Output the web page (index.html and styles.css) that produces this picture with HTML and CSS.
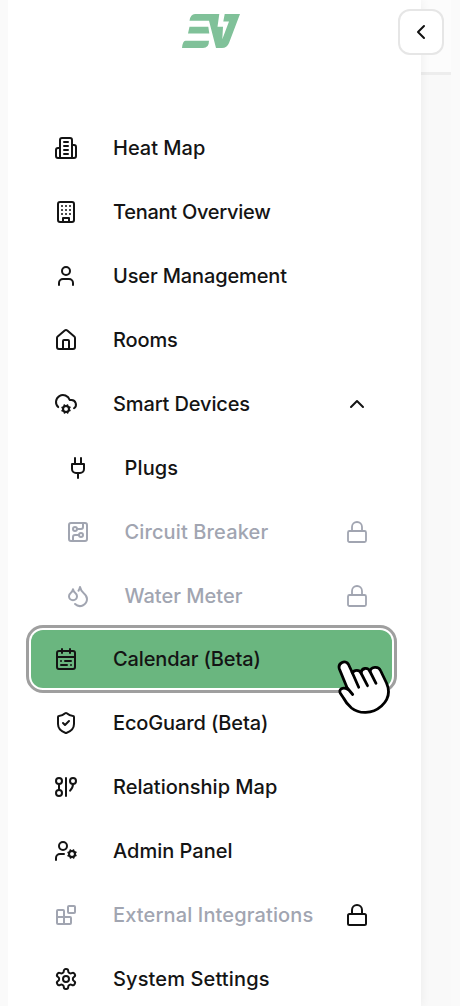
FILE: index.html
```html
<!DOCTYPE html>
<html lang="en">
<head>
<meta charset="utf-8">
<title>Navigation</title>
<link rel="stylesheet" href="styles.css">
</head>
<body>
<div class="app">
<aside class="sidebar">
<div class="brand"><svg class="logo" viewBox="0 0 58 34"><path d="M13 0H37.3L35.5 12.7H41L40.3 25.3L47 7.5H41.3L42.7 0H58L47 29Q45 34 40 34H34L27 6.7H7.5Q8.5 0 13 0ZM7.5 12.8H26.3L27.3 19.6H6ZM3.5 26.7H27Q27 34 21 34H0Q.5 27 3.5 26.7Z"/></svg></div>
<nav class="menu">
<a class="item"><svg class="icon" viewBox="0 0 24 24"><path d="M6 22V4a2 2 0 0 1 2-2h8a2 2 0 0 1 2 2v18ZM6 12H4a2 2 0 0 0-2 2v6a2 2 0 0 0 2 2h2M18 9h2a2 2 0 0 1 2 2v9a2 2 0 0 1-2 2h-2M10 6h4M10 10h4M10 14h4M10 18h4"/></svg><span class="label">Heat Map</span></a>
<a class="item"><svg class="icon" viewBox="0 0 24 24"><rect x="4" y="2" width="16" height="20" rx="2"/><path d="M9 22v-4h6v4M8 6h.01M12 6h.01M16 6h.01M8 10h.01M12 10h.01M16 10h.01M8 14h.01M12 14h.01M16 14h.01"/></svg><span class="label tightest">Tenant Overview</span></a>
<a class="item"><svg class="icon" viewBox="0 0 24 24"><path d="M19 21v-2a4 4 0 0 0-4-4H9a4 4 0 0 0-4 4v2"/><circle cx="12" cy="7" r="4"/></svg><span class="label tight">User Management</span></a>
<a class="item"><svg class="icon" viewBox="0 0 24 24"><path d="M15 21v-8a1 1 0 0 0-1-1h-4a1 1 0 0 0-1 1v8M3 10a2 2 0 0 1 .709-1.528l7-5.999a2 2 0 0 1 2.582 0l7 5.999A2 2 0 0 1 21 10v9a2 2 0 0 1-2 2H5a2 2 0 0 1-2-2z"/></svg><span class="label tight">Rooms</span></a>
<a class="item"><svg class="icon" viewBox="0 0 24 24"><circle cx="12" cy="17" r="3"/><path d="M4.2 15.1A7 7 0 1 1 15.71 8h1.79a4.5 4.5 0 0 1 2.5 8.2M15.7 18.4l-.9-.3M9.2 15.9l-.9-.3M10.6 20.7l.3-.9M13.1 14.2l.3-.9M13.6 20.7l-.4-1M10.8 14.3l-.4-1M8.3 18.6l1-.4M14.7 15.8l1-.4"/></svg><span class="label tight">Smart Devices</span><svg class="end" viewBox="0 0 24 24"><path d="m6 15 6-6 6 6"/></svg></a>
<a class="item sub"><svg class="icon" viewBox="0 0 24 24"><path d="M12 22v-5M9 8V2M15 8V2M18 8v5a4 4 0 0 1-4 4h-4a4 4 0 0 1-4-4V8Z"/></svg><span class="label loose">Plugs</span></a>
<a class="item sub muted"><svg class="icon" viewBox="0 0 24 24"><rect x="3" y="3" width="18" height="18" rx="2"/><path d="M11 9h4a2 2 0 0 0 2-2V3M7 21v-4a2 2 0 0 1 2-2h4"/><circle cx="9" cy="9" r="2"/><circle cx="15" cy="15" r="2"/></svg><span class="label loose">Circuit Breaker</span><svg class="end lock" viewBox="0 0 24 24"><rect x="3" y="11" width="18" height="11" rx="1.5"/><path d="M7 11V7a5 5 0 0 1 10 0v4"/></svg></a>
<a class="item sub muted"><svg class="icon" viewBox="0 0 24 24"><path d="M7 16.3c2.2 0 4-1.83 4-4.05 0-1.16-.57-2.26-1.71-3.19S7.29 6.75 7 5.3c-.29 1.45-1.14 2.84-2.29 3.76S3 11.1 3 12.25c0 2.22 1.8 4.05 4 4.05zM12.56 6.6A10.97 10.97 0 0 0 14 3.02c.5 2.5 2 4.9 4 6.5s3 3.5 3 5.5a6.98 6.98 0 0 1-11.91 4.97"/></svg><span class="label">Water Meter</span><svg class="end lock" viewBox="0 0 24 24"><rect x="3" y="11" width="18" height="11" rx="1.5"/><path d="M7 11V7a5 5 0 0 1 10 0v4"/></svg></a>
<a class="item active"><svg class="icon" viewBox="0 0 24 24"><rect x="3" y="4" width="18" height="18" rx="2"/><path d="M16 2v4M3 10h18M8 2v4M17 14h-6M13 18H7M7 14h.01M17 18h.01"/></svg><span class="label tight">Calendar (Beta)</span>
<svg class="hand" viewBox="0 0 54 58"><path d="M2.4 9C.5 3 8.500-1 11.500 4.500L15.500 13C17 9.500 22.500 9.500 24 13 24.500 7.500 31 7 33 11.500 34 6.500 41.500 6 43.500 10.500L49.500 23C53.500 32 51 40 44.500 46 35 54.500 22 54 14.500 48 11 45 8 41 6.500 38L3.500 33.500C1 29 6 26.500 10.700 29.300Z"/><path d="m15.700 34.500-5-6M15 12l6.700 15.300M24 13l6.500 12.700M33 11.500l6 11.800"/></svg></a>
<a class="item"><svg class="icon" viewBox="0 0 24 24"><path d="M20 13c0 5-3.5 7.5-7.66 8.95a1 1 0 0 1-.67-.01C7.5 20.5 4 18 4 13V6a1 1 0 0 1 1-1c2 0 4.5-1.2 6.24-2.72a1.17 1.17 0 0 1 1.52 0C14.51 3.81 17 5 19 5a1 1 0 0 1 1 1zM9 12l2 2 4-4"/></svg><span class="label tight">EcoGuard (Beta)</span></a>
<a class="item"><svg class="icon" viewBox="0 0 24 24"><circle cx="5" cy="6" r="3"/><circle cx="5" cy="18" r="3"/><circle cx="19" cy="6" r="3"/><path d="M5 9v6M12 3v18M16 15.7A9 9 0 0 0 19 9"/></svg><span class="label">Relationship Map</span></a>
<a class="item"><svg class="icon" viewBox="0 0 24 24"><circle cx="18" cy="15" r="3"/><circle cx="9" cy="7" r="4"/><path d="M10 15H6a4 4 0 0 0-4 4v2M21.7 16.4l-.9-.3M15.2 13.9l-.9-.3M16.6 18.7l.3-.9M19.1 12.2l.3-.9M19.6 18.7l-.4-1M16.8 12.3l-.4-1M14.3 16.6l1-.4M20.7 13.8l1-.4"/></svg><span class="label">Admin Panel</span></a>
<a class="item muted"><svg class="icon" viewBox="0 0 24 24"><rect x="14" y="3" width="7" height="7" rx="1"/><path d="M10 21V8a1 1 0 0 0-1-1H4a1 1 0 0 0-1 1v12a1 1 0 0 0 1 1h12a1 1 0 0 0 1-1v-5a1 1 0 0 0-1-1H3"/></svg><span class="label loose">External Integrations</span><svg class="end dark" viewBox="0 0 24 24"><rect x="3" y="11" width="18" height="11" rx="1.5"/><path d="M7 11V7a5 5 0 0 1 10 0v4"/></svg></a>
<a class="item"><svg class="icon" viewBox="0 0 24 24"><path d="M12.22 2h-.44a2 2 0 0 0-2 2v.18a2 2 0 0 1-1 1.73l-.43.25a2 2 0 0 1-2 0l-.15-.08a2 2 0 0 0-2.73.73l-.22.38a2 2 0 0 0 .73 2.73l.15.1a2 2 0 0 1 1 1.72v.51a2 2 0 0 1-1 1.74l-.15.09a2 2 0 0 0-.73 2.73l.22.38a2 2 0 0 0 2.73.73l.15-.08a2 2 0 0 1 2 0l.43.25a2 2 0 0 1 1 1.73V20a2 2 0 0 0 2 2h.44a2 2 0 0 0 2-2v-.18a2 2 0 0 1 1-1.73l.43-.25a2 2 0 0 1 2 0l.15.08a2 2 0 0 0 2.73-.73l.22-.39a2 2 0 0 0-.73-2.73l-.15-.08a2 2 0 0 1-1-1.74v-.5a2 2 0 0 1 1-1.74l.15-.09a2 2 0 0 0 .73-2.73l-.22-.38a2 2 0 0 0-2.73-.73l-.15.08a2 2 0 0 1-2 0l-.43-.25a2 2 0 0 1-1-1.73V4a2 2 0 0 0-2-2z"/><circle cx="12" cy="12" r="3"/></svg><span class="label loose">System Settings</span></a>
</nav>
<button class="collapse" aria-label="Collapse"><svg viewBox="0 0 24 24"><path d="m15 6-6 6 6 6"/></svg></button>
</aside>
<main class="content"><div class="topbar"></div></main>
</div>
</body>
</html>
```

FILE: styles.css
```css
* { box-sizing: border-box; }
body { margin: 0; height: 1006px; overflow: hidden; background: #fafafa; font-family: Inter, "Liberation Sans", sans-serif; color: #141414; }
.app { display: flex; height: 1006px; padding-left: 8px; }
.sidebar { position: relative; z-index: 1; width: 413px; flex: none; background: #fff; box-shadow: 1px 0 9px rgba(0, 0, 0, .055); clip-path: inset(0 -30px 0 0); }
.content { width: 30px; background: #f9f9f9; }
.topbar { height: 75px; background: #fcfcfc; border-bottom: 3px solid #ededed; }
.brand { height: 119.3px; padding: 14px 0 0 174.300px; }
.menu { display: flex; flex-direction: column; gap: 5.9px; padding: 0 29px 0 23px; }
.item { position: relative; display: flex; align-items: center; flex: none; height: 58px; padding: 0 23px; border-radius: 12px; }
.sub { padding-left: 34.5px; }
.muted { color: #a1a5b1; }
.active { background: #6ab67f; outline: 3px solid #9f9f9f; outline-offset: 2px; }
svg { fill: none; stroke: currentColor; stroke-width: 2; stroke-linecap: round; stroke-linejoin: round; }
.logo { display: block; width: 58px; height: 34px; fill: #80c199; stroke: none; }
.icon { width: 24px; height: 24px; flex: none; }
.label { margin-left: 35px; font-size: 20px; font-weight: 500; line-height: 28px; white-space: nowrap; }
.tightest { letter-spacing: -.27px; }
.tight { letter-spacing: -.13px; }
.loose { letter-spacing: .13px; }
.end { width: 24px; height: 24px; margin-left: auto; }
.lock { stroke-width: 1.8; }
.dark { color: #111; }
.hand { position: absolute; left: 306px; top: 30px; width: 54px; height: 58px; fill: #fff; stroke: #000; stroke-width: 2.8; }
.collapse { position: absolute; left: 390px; top: 9px; display: flex; align-items: center; justify-content: center; width: 46px; height: 46px; padding: 0; color: #111; background: #fff; border: 2px solid #e6e6e6; border-radius: 12px; }
.collapse svg { width: 24px; height: 24px; }
```
